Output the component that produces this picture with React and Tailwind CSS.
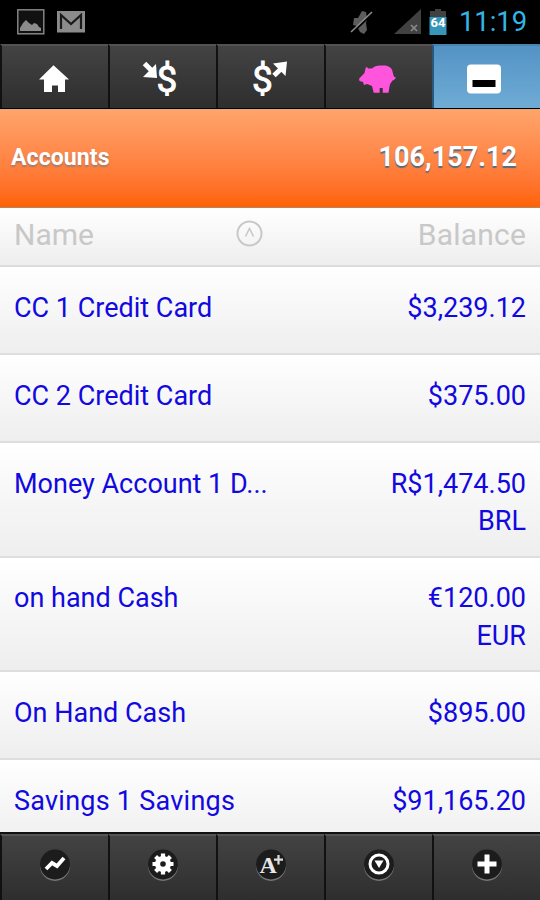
import React from "react";

const accounts = [
  { name: "CC 1 Credit Card", balance: "$3,239.12" },
  { name: "CC 2 Credit Card", balance: "$375.00" },
  { name: "Money Account 1 D...", balance: "R$1,474.50", currency: "BRL" },
  { name: "on hand Cash", balance: "€120.00", currency: "EUR" },
  { name: "On Hand Cash", balance: "$895.00" },
  { name: "Savings 1 Savings", balance: "$91,165.20", wide: true },
];

function StatusBar() {
  return (
    <div className="flex h-11 shrink-0 items-center bg-black pl-[17px] pr-[11px]">
      <svg width="28" height="26" viewBox="0 0 28 26">
        <rect x="0.8" y="0.8" width="26" height="24" fill="#111" stroke="#8b8b8b" strokeWidth="1.4" />
        <path d="M3 22v-3l3-5 3-3 3 3 3 2 2-2 3 1 2 3 2 1v3z" fill="#8b8b8b" />
      </svg>
      <svg className="ml-3" width="28" height="22" viewBox="0 0 28 22">
        <rect width="28" height="21.5" fill="#8b8b8b" />
        <path d="M4 18V4l10 9 10-9v14" fill="none" stroke="#1a1a1a" strokeWidth="2.2" />
      </svg>
      <div className="ml-auto flex items-center">
        <svg width="24" height="26" viewBox="0 0 24 26">
          <path d="M4 9h4l4-7 4 1 1 7-1 4 1 7-3 4-4-2-3-6-4-1z" fill="#5c5c5c" />
          <path d="M2 24 23 4" stroke="#000" strokeWidth="2" />
          <path d="M1 23 22 3" stroke="#8b8b8b" strokeWidth="1.6" />
        </svg>
        <svg className="ml-5" width="28" height="26" viewBox="0 0 28 26">
          <path d="M0 25 27 0v25z" fill="#414141" />
          <path d="m17 16 6 6m0-6-6 6" stroke="#8b8b8b" strokeWidth="1.6" />
        </svg>
        <svg className="ml-[7px]" width="18" height="28" viewBox="0 0 18 28">
          <path d="M6 1h6v2h5v7H1V3h5z" fill="#414141" />
          <rect x="0.5" y="9" width="17" height="18" fill="#3795b9" />
          <text x="9" y="19" textAnchor="middle" fontFamily="Roboto" fontSize="13" fontWeight="700" fill="#fff">64</text>
        </svg>
        <span className="mr-0.5 ml-3 text-[27.5px] leading-none tracking-[-0.1px] text-[#33b5e5]">11:19</span>
      </div>
    </div>
  );
}

const topTabs = [
  <path d="M20.5 13.3 36 27.5h-4V39.500q0 .5-.5.5H25v-6.500h-6V40h-7.500q-.5 0-.5-.5v-12H6z" fill="#fff" />,
  <>
    <path d="m3.500 11.500 8 8" stroke="#fff" strokeWidth="5" />
    <path d="m15 12 1 14-14-1z" fill="#fff" />
    <text x="15.500" y="40" fontFamily="Roboto" fontSize="37" fill="#fff" stroke="#fff" strokeWidth="0.9">$</text>
  </>,
  <>
    <text x="3" y="40" fontFamily="Roboto" fontSize="37" fill="#fff" stroke="#fff" strokeWidth="0.9">$</text>
    <path d="m25 23.500 9-8.500" stroke="#fff" strokeWidth="5" />
    <path d="M24 11.500 38 9.500 36.500 24z" fill="#fff" />
  </>,
  <path
    d="M2 26.700 7.500 21 9 14.700l3 2 1.500-.5q1.500 1 3-1 2-1.700 6-1.700h6q7 1 7.500 8l1 3.200 2 .8-2 2.500-1.500.5q-2.500 3-3 6l-1 6.200h-5.800V36h-3v4.700h-6L15 34l-5-2-3 1-1-3-3.500-1z"
    fill="#ff54dc"
  />,
  <>
    <rect x="2" y="12.500" width="34" height="29" rx="4" fill="#fff" />
    <rect x="7.500" y="28" width="23" height="7" fill="#000" />
  </>,
];

const bottomTabs = [
  <path d="m7 20 6-6 5 3 7-8" fill="none" stroke="#fff" strokeWidth="3.8" />,
  <>
    <path
      d="M16 4.500v21M5.500 15h21M8.600 7.600l14.800 14.800M23.400 7.600 8.600 22.400"
      stroke="#fff"
      strokeWidth="4.200"
    />
    <circle cx="16" cy="15" r="8" fill="#fff" />
    <circle cx="16" cy="15" r="2.800" fill="#1c1c1c" />
  </>,
  <>
    <text x="4.500" y="24" fontFamily="Liberation Serif" fontSize="24" fontWeight="700" fill="#e8e8e8">A</text>
    <path d="M23.500 6v9.500M19 10.700h9" stroke="#ddd" strokeWidth="2.200" />
  </>,
  <>
    <circle cx="16" cy="15" r="9" fill="none" stroke="#fff" strokeWidth="3" />
    <path d="M11.500 11.500h9L16 19z" fill="#fff" />
  </>,
  <path d="M16 5.500v19M6.500 15h19" stroke="#fff" strokeWidth="5" />,
];

export default function App() {
  return (
    <div className="flex h-[900px] w-[540px] flex-col overflow-hidden bg-black font-[Roboto,sans-serif]">
      <StatusBar />

      <nav className="grid h-[65px] shrink-0 grid-cols-5 border-b border-black">
        {topTabs.map((icon, i) => (
          <button
            key={i}
            type="button"
            className={
              i === 4
                ? "flex justify-center border-t-2 border-l-2 border-t-[#4a83ad] border-l-[#28597c] bg-linear-to-b from-[#5393c5] to-[#6facd5] pt-1.5"
                : "flex justify-center border-t-2 border-l-2 border-t-[#525252] border-l-[#111] bg-linear-to-b from-[#434343] to-[#2e2e2e] pt-1.5"
            }
          >
            <svg width="44" height="48" viewBox="0 0 44 48">
              {icon}
            </svg>
          </button>
        ))}
      </nav>

      <header className="flex h-[99px] shrink-0 items-center justify-between border-t border-b border-t-[#e9a67d] border-b-[#b88468] bg-linear-to-b from-[#ffa46b] to-[#ff6200] pr-[23px] pb-0.5 pl-[11px] font-bold text-white">
        <h1 className="pt-0.5 text-[23px] tracking-[0.1px] text-shadow-[0_2px_2px_#66778899]">Accounts</h1>
        <span className="text-[27px] text-shadow-[0_2px_1px_#556b80]">106,157.12</span>
      </header>

      <main className="flex min-h-0 flex-1 flex-col overflow-hidden">
        <div className="flex h-[59px] shrink-0 items-center border-b-2 border-[#dcdcdc] bg-linear-to-b from-white to-[#eeeeee] px-3.5 pb-[5px] text-[30px] text-[#c8c8c8]">
          <span className="w-[221px]">Name</span>
          <svg width="28" height="28" viewBox="0 0 28 28" fill="none" stroke="#c8c8c8">
            <circle cx="14.5" cy="13.5" r="12" strokeWidth="2" />
            <path d="m10.500 16.500 4-8 4 8" strokeWidth="1.600" />
          </svg>
          <span className="ml-auto tracking-[0.2px]">Balance</span>
        </div>

        {accounts.map((account) => (
          <div
            key={account.name}
            className="flex min-h-[88px] shrink-0 justify-between border-b-2 border-[#dedede] bg-linear-to-b from-white to-[#eeeeee] px-3.5 pt-[22.5px] pb-[15px] text-[27px] leading-[37.5px] text-[#1208e0]"
          >
            <span className={account.wide ? "tracking-[0.25px]" : ""}>{account.name}</span>
            <div className="text-right">
              <p>{account.balance}</p>
              {account.currency && <p>{account.currency}</p>}
            </div>
          </div>
        ))}
      </main>

      <nav className="grid h-[68px] shrink-0 grid-cols-5 border-t-2 border-[#111]">
        {bottomTabs.map((icon, i) => (
          <button
            key={i}
            type="button"
            className="flex justify-center border-t-2 border-l-2 border-t-[#555] border-l-[#111] bg-linear-to-b from-[#434343] to-[#2e2e2e] pt-[13px]"
          >
            <svg width="32" height="34" viewBox="0 0 32 34">
              <circle cx="16" cy="17" r="15" fill="#777" />
              <circle cx="16" cy="15.5" r="15" fill="#1c1c1c" />
              {icon}
            </svg>
          </button>
        ))}
      </nav>
    </div>
  );
}
